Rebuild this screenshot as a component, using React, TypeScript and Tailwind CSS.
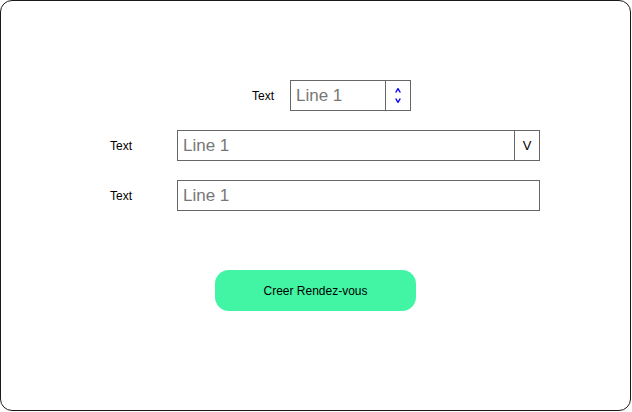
export default function App() {
  return (
    <div className="w-[632px] h-[412px] bg-white font-['Liberation_Sans',Arial,sans-serif]">
      <div className="w-[631px] h-[411px] border border-[#1a1a1a] rounded-[12px] flex flex-col pt-[79px]">
        {/* row 1: number spinner */}
        <div className="flex items-center ml-[251px] h-[31px]">
          <span className="text-[12px] text-black w-[38px]">Text</span>
          <div className="flex h-[31px] w-[121px] border border-[#666666]">
            <div className="flex-1 flex items-center pl-[5px] text-[17px] text-[#777777]">Line 1</div>
            <div className="w-[25px] border-l border-[#666666] flex flex-col items-center justify-center gap-[5px]">
              <svg width="6" height="5" viewBox="0 0 6 5">
                <path d="M0.7 4.5 L3 0.7 L5.3 4.5" fill="none" stroke="#0000ff" strokeWidth="1.4" />
              </svg>
              <svg width="6" height="5" viewBox="0 0 6 5">
                <path d="M0.7 0.5 L3 4.3 L5.3 0.5" fill="none" stroke="#0000ff" strokeWidth="1.4" />
              </svg>
            </div>
          </div>
        </div>

        {/* row 2: select */}
        <div className="flex items-center ml-[109px] mt-[19px] h-[31px]">
          <span className="text-[12px] text-black w-[67px]">Text</span>
          <div className="flex h-[31px] w-[363px] border border-[#666666]">
            <div className="flex-1 flex items-center pl-[5px] text-[17px] text-[#777777]">Line 1</div>
            <div className="w-[25px] border-l border-[#666666] flex items-center justify-center text-[13px] text-black">V</div>
          </div>
        </div>

        {/* row 3: text input */}
        <div className="flex items-center ml-[109px] mt-[19px] h-[31px]">
          <span className="text-[12px] text-black w-[67px]">Text</span>
          <div className="flex items-center h-[31px] w-[363px] border border-[#666666] pl-[5px] text-[17px] text-[#777777]">
            Line 1
          </div>
        </div>

        <div className="ml-[214px] mt-[59px]">
          <button className="w-[201px] h-[41px] rounded-[14px] bg-[#42f5a5] text-[12px] text-black">
            Creer Rendez-vous
          </button>
        </div>
      </div>
    </div>
  );
}
